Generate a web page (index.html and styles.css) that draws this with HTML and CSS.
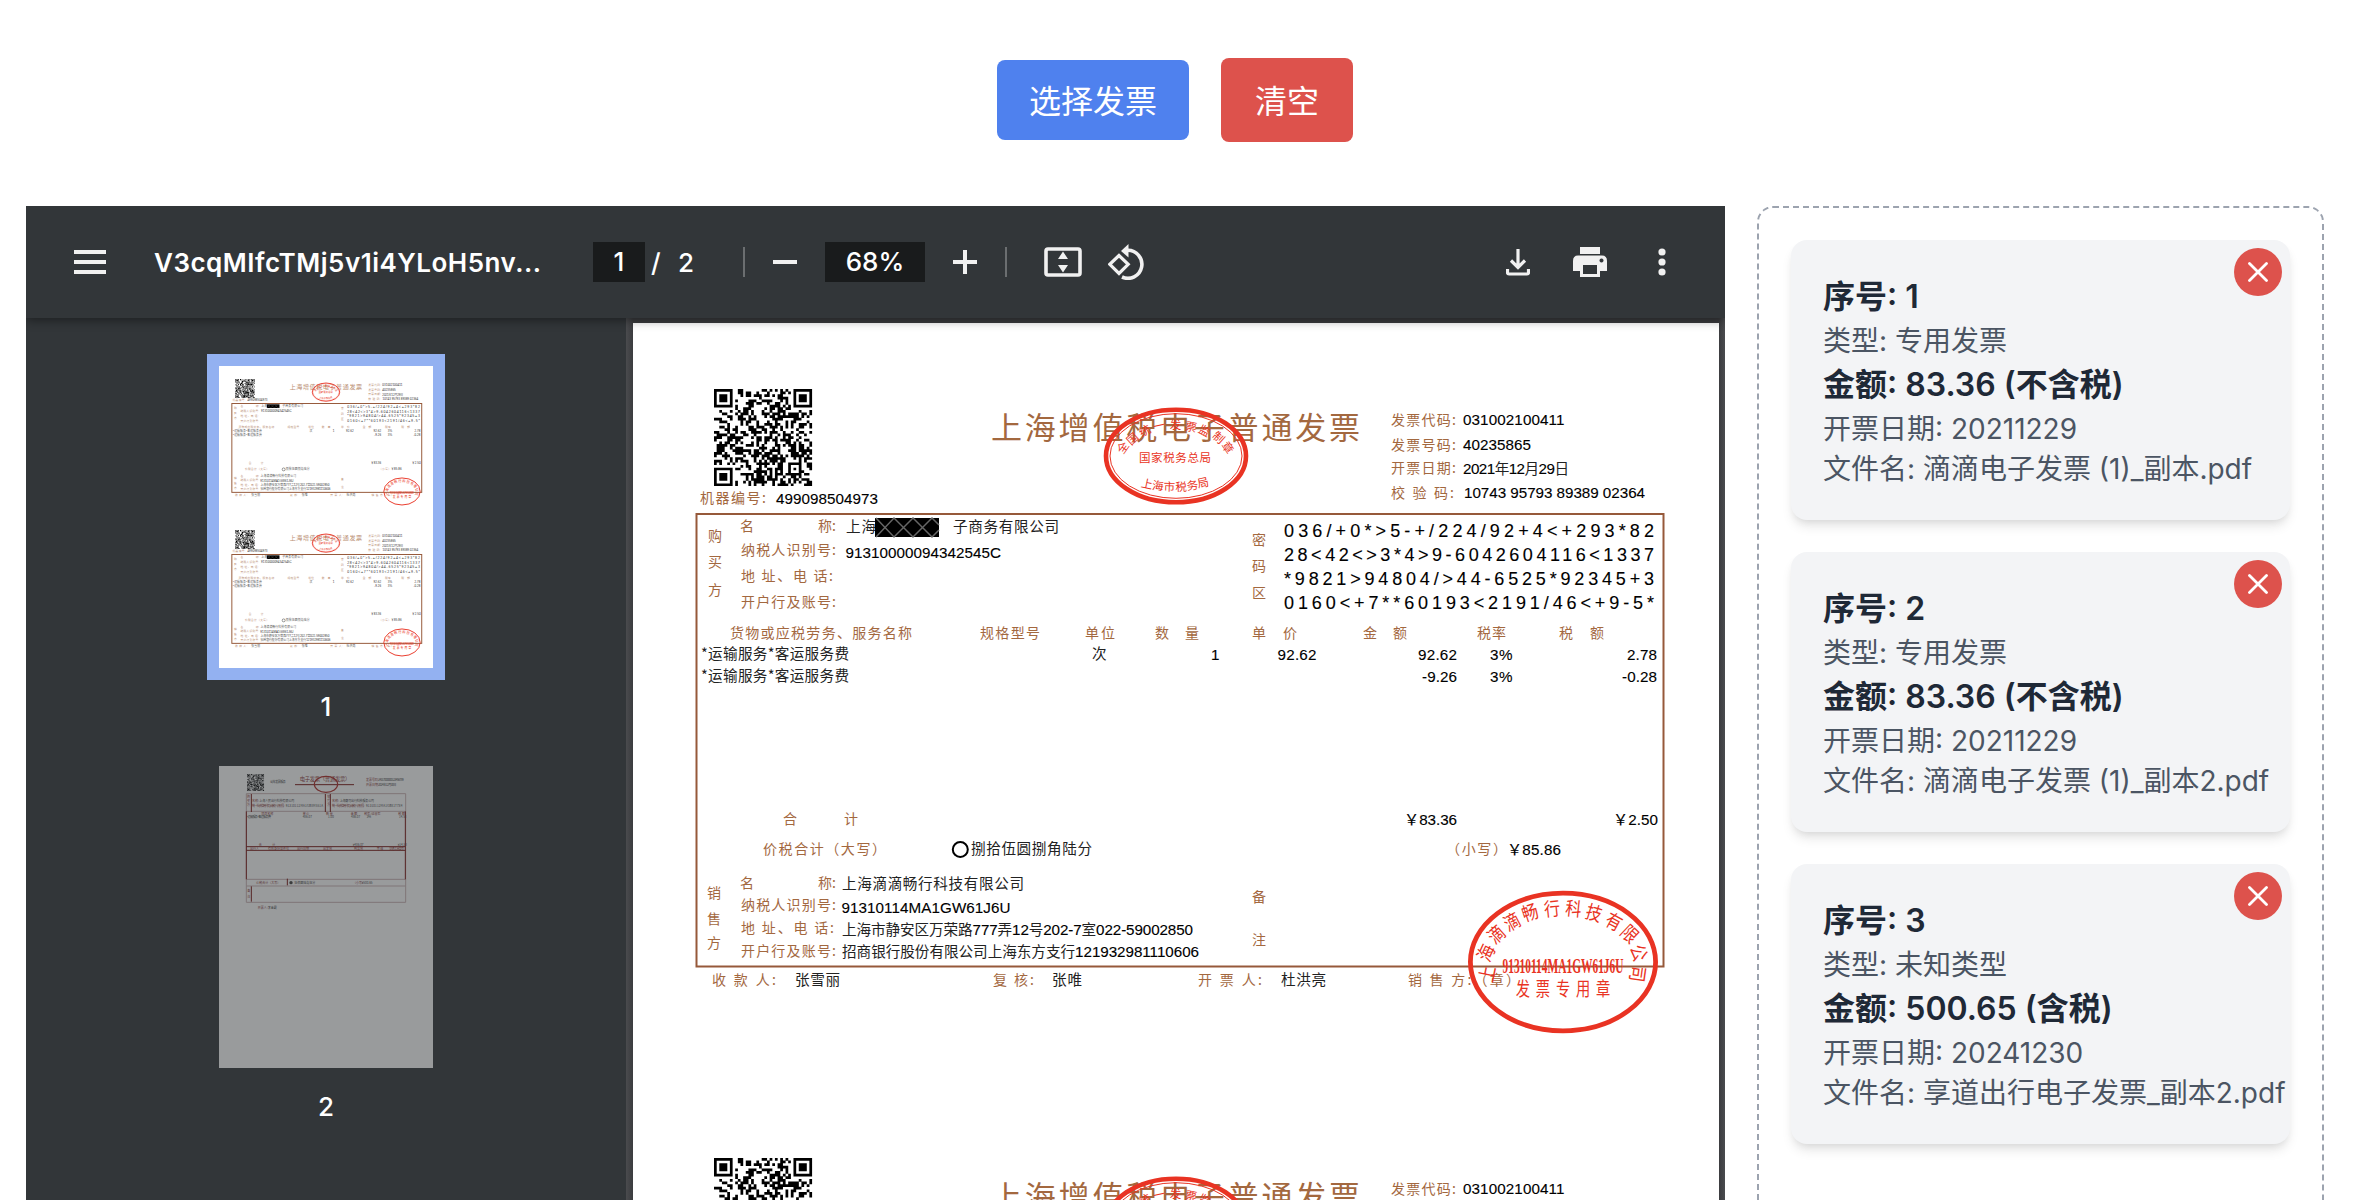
FILE: index.html
```html
<!DOCTYPE html>
<html lang="zh-CN">
<head>
<meta charset="utf-8">
<title>发票合并</title>
<link rel="stylesheet" href="styles.css">
</head>
<body>
<svg class="defs" aria-hidden="true">
  <symbol id="invoice" viewBox="633 323 1086 769">
    <path id="qr" transform="translate(714 389) scale(2.649 2.622)" d=""/>
    <g class="label">
      <text class="heading" x="991" y="440" textLength="369">上海增值税电子普通发票</text>
      <text x="700" y="504" textLength="66">机器编号:</text>
      <text x="1391" y="425.5" textLength="65">发票代码:</text>
      <text x="1391" y="450.5" textLength="65">发票号码:</text>
      <text x="1391" y="473.5" textLength="65">开票日期:</text>
      <text x="1391" y="498.5" textLength="63">校 验 码:</text>
      <text x="708" y="542">购</text><text x="708" y="568">买</text><text x="708" y="595.5">方</text>
      <text x="740" y="532">名</text><text x="818" y="532" textLength="18">称:</text>
      <text x="741" y="556" textLength="95">纳税人识别号:</text>
      <text x="741" y="581.5" textLength="92">地 址、电 话:</text>
      <text x="741" y="607.5" textLength="95">开户行及账号:</text>
      <text x="1252" y="545.5">密</text><text x="1252" y="571.5">码</text><text x="1252" y="598.5">区</text>
      <text x="730" y="638.5" textLength="182">货物或应税劳务、服务名称</text>
      <text x="980" y="638.5" textLength="60">规格型号</text>
      <text x="1085" y="638.5" textLength="30">单位</text>
      <text x="1155" y="638.5">数</text><text x="1185" y="638.5">量</text>
      <text x="1252" y="638.5">单</text><text x="1283" y="638.5">价</text>
      <text x="1363" y="638.5">金</text><text x="1393" y="638.5">额</text>
      <text x="1477" y="638.5" textLength="29">税率</text>
      <text x="1559" y="638.5">税</text><text x="1590" y="638.5">额</text>
      <text x="783" y="824.5">合</text><text x="844" y="824.5">计</text>
      <text x="763" y="854.5" textLength="123">价税合计（大写）</text>
      <text x="1446" y="854.5" textLength="61">（小写）</text>
      <text x="1252" y="902.5">备</text><text x="1252" y="946">注</text>
      <text x="707" y="898.5">销</text><text x="707" y="924.5">售</text><text x="707" y="949">方</text>
      <text x="740" y="888.5">名</text><text x="818" y="888.5" textLength="18">称:</text>
      <text x="741" y="910.5" textLength="95">纳税人识别号:</text>
      <text x="741" y="933.5" textLength="93">地 址、电 话:</text>
      <text x="741" y="957" textLength="95">开户行及账号:</text>
      <text x="712" y="985.5" textLength="64">收 款 人:</text>
      <text x="993" y="985.5" textLength="41">复 核:</text>
      <text x="1198" y="985.5" textLength="64">开 票 人:</text>
      <text x="1408" y="985.5" textLength="112">销 售 方:（章）</text>
    </g>
    <rect class="frame" x="696.5" y="514" width="967" height="452.5"/>
    <g class="value">
      <text x="776" y="504.5" textLength="102">499098504973</text>
      <text x="1463" y="426" textLength="101.5">031002100411</text>
      <text x="1463" y="450.5" textLength="68">40235865</text>
      <text x="1463" y="474.5" textLength="106">2021<tspan class="han">年</tspan>12<tspan class="han">月</tspan>29<tspan class="han">日</tspan></text>
      <text x="1464" y="498.5" textLength="181">10743 95793 89389 02364</text>
      <text class="han" x="846" y="533" textLength="30">上海</text>
      <text class="han" x="953" y="533" textLength="106">子商务有限公司</text>
      <text x="845.5" y="558.5" textLength="155.5">91310000094342545C</text>
      <g class="cipher">
        <text x="1284" y="537.5" textLength="370">036/+0*&gt;5-+/224/92+4&lt;+293*82</text>
        <text x="1284" y="561.5" textLength="370">28&lt;42&lt;&gt;3*4&gt;9-6042604116&lt;1337</text>
        <text x="1284" y="586" textLength="370">*9821&gt;94804/&gt;44-6525*92345+3</text>
        <text x="1284" y="609.5" textLength="370">0160&lt;+7**60193&lt;2191/46&lt;+9-5*</text>
      </g>
      <text class="han" x="701" y="659.5" textLength="148">*运输服务*客运服务费</text>
      <text class="han" x="701" y="681.5" textLength="148">*运输服务*客运服务费</text>
      <text class="han" x="1092" y="659.5">次</text>
      <text x="1211" y="660.5">1</text>
      <text x="1277.5" y="660.5" textLength="39">92.62</text>
      <text x="1418" y="660.5" textLength="39">92.62</text>
      <text x="1490" y="660.5" textLength="22.500">3%</text>
      <text x="1627" y="660.5" textLength="30">2.78</text>
      <text x="1422" y="682.500" textLength="35">-9.26</text>
      <text x="1490" y="682.500" textLength="22.500">3%</text>
      <text x="1622" y="682.500" textLength="35">-0.28</text>
      <text x="1404" y="825.500" textLength="53">￥83.36</text>
      <text x="1613" y="825.500" textLength="45">￥2.50</text>
      <text x="1507" y="855.500" textLength="54">￥85.86</text>
      <text class="han" x="971" y="854.5" textLength="121">捌拾伍圆捌角陆分</text>
      <text class="han" x="842" y="889.5" textLength="182">上海滴滴畅行科技有限公司</text>
      <text x="841.5" y="913.5" textLength="169">91310114MA1GW61J6U</text>
      <text x="842" y="935.5" textLength="351"><tspan class="han">上海市静安区万荣路</tspan>777<tspan class="han">弄</tspan>12<tspan class="han">号</tspan>202-7<tspan class="han">室</tspan>022-59002850</text>
      <text x="842" y="958" textLength="357"><tspan class="han">招商银行股份有限公司上海东方支行</tspan>121932981110606</text>
      <text class="han" x="795" y="985.5" textLength="45">张雪丽</text>
      <text class="han" x="1052" y="985.5" textLength="30">张唯</text>
      <text class="han" x="1281" y="985.5" textLength="45">杜洪亮</text>
    </g>
    <circle class="mark" cx="960.3" cy="849.5" r="7.5"/>
    <rect x="875" y="518" width="64" height="19"/>
    <path class="redact" d="M876 518l18 19 19-19 19 19 7-7M876 537l18-19 19 19 19-19 7 7"/>
    <g class="stamp">
      <ellipse cx="1176" cy="456" rx="70" ry="46.3" stroke-width="4.6"/>
      <ellipse cx="1176" cy="456" rx="66" ry="42.3" stroke-width="1"/>
      <g class="ring-small">
        <text transform="translate(1123 447.7) rotate(-55)" y="4">全</text>
        <text transform="translate(1132.7 439) rotate(-42)" y="4">国</text>
        <text transform="translate(1145 431) rotate(-28)" y="4">统</text>
        <text transform="translate(1159 426) rotate(-12)" y="4">一</text>
        <text transform="translate(1175.6 424.5)" y="4">发</text>
        <text transform="translate(1191 427) rotate(12)" y="4">票</text>
        <text transform="translate(1204.5 431) rotate(28)" y="4">监</text>
        <text transform="translate(1218.5 437.5) rotate(42)" y="4">制</text>
        <text transform="translate(1227.5 447.7) rotate(55)" y="4">章</text>
        <text x="1175" y="462" textLength="72">国家税务总局</text>
        <text transform="translate(1147 484) rotate(12)" y="4">上</text>
        <text transform="translate(1158 486) rotate(7)" y="4">海</text>
        <text transform="translate(1169.5 487) rotate(2)" y="4">市</text>
        <text transform="translate(1181 487) rotate(-2)" y="4">税</text>
        <text transform="translate(1192.5 485.5) rotate(-7)" y="4">务</text>
        <text transform="translate(1203 483) rotate(-12)" y="4">局</text>
      </g>
      <ellipse cx="1563" cy="962" rx="92.6" ry="68.8" stroke-width="4.8"/>
      <g class="ring-large">
        <text transform="translate(1487 974) rotate(-78) scale(.85 1)" y="7">上</text>
        <text transform="translate(1486 952.7) rotate(-65) scale(.85 1)" y="7">海</text>
        <text transform="translate(1496.4 934.5) rotate(-42) scale(.85 1)" y="7">滴</text>
        <text transform="translate(1512 921.7) rotate(-28) scale(.85 1)" y="7">滴</text>
        <text transform="translate(1530 912.7) rotate(-18) scale(.85 1)" y="7">畅</text>
        <text transform="translate(1552 908.7) rotate(-6) scale(.85 1)" y="7">行</text>
        <text transform="translate(1573.5 908.7) rotate(6) scale(.85 1)" y="7">科</text>
        <text transform="translate(1594 913) rotate(17) scale(.85 1)" y="7">技</text>
        <text transform="translate(1614 921.7) rotate(28) scale(.85 1)" y="7">有</text>
        <text transform="translate(1629.7 934) rotate(43) scale(.85 1)" y="7">限</text>
        <text transform="translate(1638.8 952.7) rotate(70) scale(.85 1)" y="7">公</text>
        <text transform="translate(1637.7 974) rotate(98) scale(.85 1)" y="7">司</text>
        <text transform="translate(1563 996) scale(.75 1)" textLength="126">发票专用章</text>
      </g>
      <text class="code" x="1563" y="972.5" textLength="121" lengthAdjust="spacingAndGlyphs">91310114MA1GW61J6U</text>
    </g>
  </symbol>
</svg>

<main class="app">
  <div class="actions">
    <button class="btn btn-pick">选择发票</button>
    <button class="btn btn-clear">清空</button>
  </div>

  <div class="workspace">
    <section class="viewer">
      <header class="toolbar">
        <svg class="menu" width="32" height="24"><path d="M0 0h32v4H0zM0 10h32v4H0zM0 20h32v4H0z"/></svg>
        <span class="filename">V3cqMIfcTMj5v1i4YLoH5nv...</span>
        <span class="field page-no">1</span>
        <span class="slash">/</span>
        <span class="total">2</span>
        <i class="divider"></i>
        <svg class="minus" width="24" height="24"><path d="M0 10h24v4H0z"/></svg>
        <span class="field zoom">68%</span>
        <svg class="plus" width="24" height="24"><path d="M0 10h24v4H0zM10 0h4v24h-4z"/></svg>
        <i class="divider second"></i>
        <svg class="fit" width="38" height="30"><rect x="2" y="2" width="34" height="26" rx="2" fill="none" stroke="#f1f1f1" stroke-width="3.6"/><path d="M19 4.500l5 7.500H14zM19 25.500l5-7.500H14z"/></svg>
        <svg class="rotate" width="36" height="36"><path d="M11 11.500L1.800 20.300l9.200 9.200 9.200-9.200z" fill="none" stroke="#f1f1f1" stroke-width="3.200"/><path d="M19.500 6.300A14 14 0 1 1 14 33" fill="none" stroke="#f1f1f1" stroke-width="3.600"/><path d="M20.500 0v13.500L13 7z"/></svg>
        <span class="tools">
          <svg width="24" height="28" viewBox="0 0 24 28"><path d="M12 1v19M5 12.500l7 7 7-7M1.500 21v3.500q0 1.500 1.500 1.500h18q1.500 0 1.500-1.500V21" fill="none" stroke="#f1f1f1" stroke-width="3.200"/></svg>
          <svg width="34" height="30"><path fill-rule="evenodd" d="M7 0h20v7H7zM5 8.500h24q5 0 5 5.500v10h-7v6H7v-6H0V14q0-5.500 5-5.500zM10 18h14v9H10zM28.500 11.500a2 2 0 1 0 .01 0z"/></svg>
          <svg width="8" height="28"><circle cx="4" cy="4" r="3.600"/><circle cx="4" cy="14" r="3.600"/><circle cx="4" cy="24" r="3.600"/></svg>
        </span>
      </header>
      <div class="viewer-body">
        <aside class="thumbs">
          <div class="thumb selected">
            <svg viewBox="0 0 214 151.500"><use href="#invoice"/></svg>
            <svg viewBox="0 0 214 151.500"><use href="#invoice"/></svg>
          </div>
          <span class="thumb-no">1</span>
          <div class="thumb dim">
            <svg class="second-page" viewBox="0 0 642 906">
              <use href="#qr-small" transform="translate(84 24) scale(1.380)"/>
              <g class="mini-black">
                <text x="154" y="52" textLength="46">动车发票服务</text>
                <text x="478" y="46" textLength="76">24317000000123456789</text>
                <text x="478" y="61" textLength="54">2024年12月30日</text>
                <text x="121" y="109" textLength="105">上海人民出行科技有限公司</text>
                <text x="200" y="123" textLength="112">91310112MA1GB8M551A</text>
                <text x="362" y="109" textLength="103">上海赛可出行科技服务公司</text>
                <text x="441" y="123" textLength="109">91310112MA1GBX1T7X4</text>
                <text x="83" y="157" textLength="73">*运输服务*客运服务费</text>
                <text x="251" y="157">486.07</text><text x="327" y="157">1.00</text><text x="396" y="157">486.07</text><text x="443" y="157">3%</text><text x="540" y="157">14.58</text>
                <text x="401" y="240">¥486.07</text><text x="536" y="240">¥14.58</text>
                <text x="226" y="354">伍佰圆陆角伍分</text><text x="428" y="354">¥500.65</text><text x="146" y="428">李金霞</text>
                <circle cx="216" cy="350" r="5"/>
              </g>
              <g class="mini-red">
                <text class="mini-title" x="242" y="46" textLength="152">电子发票（普通发票）</text>
                <text x="441" y="46">发票号码:</text><text x="441" y="61">开票日期:</text>
                <text x="84" y="97">购</text><text x="84" y="109">买</text><text x="84" y="121">方</text><text x="325" y="97">销</text><text x="325" y="109">售</text><text x="325" y="121">方</text>
                <text x="99" y="109">名称:</text><text x="99" y="123" textLength="97">统一社会信用代码/纳税人识别号:</text>
                <text x="339" y="109">名称:</text><text x="339" y="123" textLength="97">统一社会信用代码/纳税人识别号:</text>
                <text x="127" y="147">项目名称</text><text x="251" y="147">单 价</text><text x="321" y="147">数 量</text><text x="395" y="147">金 额</text><text x="436" y="147">税率/征收率</text><text x="538" y="147">税 额</text>
                <text x="119" y="240">合</text><text x="160" y="240">计</text>
                <text x="93" y="252">出行人</text><text x="147" y="252">有效身份证件号</text><text x="234" y="252">出行日期</text><text x="312" y="252">出发地</text><text x="405" y="252">到达地</text><text x="473" y="252">等 级</text><text x="510" y="252" textLength="46">交通工具类型</text>
                <text x="112" y="354">价税合计（大写）</text><text x="402" y="354">（小写）</text><text x="85" y="378">备</text><text x="85" y="396">注</text><text x="116" y="428">开票人:</text>
              </g>
              <path class="rule-light" d="M82 83h478v326H82zM82 136h478M82 340h478M82 360h478"/>
              <path class="rule-dark" d="M97 84v54M319 84v54M334 84v54M82 136v204M559 136v204M82 242h477M82 253h477M205 338v20M97 361v46M228 56h177"/>
              <ellipse class="mini-stamp" cx="321" cy="55" rx="35" ry="24"/>
            </svg>
          </div>
          <span class="thumb-no">2</span>
        </aside>
        <div class="canvas">
          <div class="sheet">
            <svg viewBox="0 0 1086 769"><use href="#invoice"/></svg>
            <svg viewBox="0 0 1086 769"><use href="#invoice"/></svg>
          </div>
        </div>
      </div>
    </section>

    <aside class="panel">
      <article class="card">
        <h3>序号: 1</h3>
        <p>类型: 专用发票</p>
        <h3>金额: 83.36 (不含税)</h3>
        <p>开票日期: 20211229</p>
        <p>文件名: 滴滴电子发票 (1)_副本.pdf</p>
        <button class="close"><svg width="20" height="20"><path d="M1.500 1.500l17 17M18.500 1.500l-17 17"/></svg></button>
      </article>
      <article class="card">
        <h3>序号: 2</h3>
        <p>类型: 专用发票</p>
        <h3>金额: 83.36 (不含税)</h3>
        <p>开票日期: 20211229</p>
        <p>文件名: 滴滴电子发票 (1)_副本2.pdf</p>
        <button class="close"><svg width="20" height="20"><path d="M1.500 1.500l17 17M18.500 1.500l-17 17"/></svg></button>
      </article>
      <article class="card">
        <h3>序号: 3</h3>
        <p>类型: 未知类型</p>
        <h3>金额: 500.65 (含税)</h3>
        <p>开票日期: 20241230</p>
        <p>文件名: 享道出行电子发票_副本2.pdf</p>
        <button class="close"><svg width="20" height="20"><path d="M1.500 1.500l17 17M18.500 1.500l-17 17"/></svg></button>
      </article>
    </aside>
  </div>
</main>
<svg class="defs" aria-hidden="true"><path id="qr-small" d=""/></svg>
<script src="qr.js"></script>
</body>
</html>
```
FILE: qr.js
```js
// Builds the QR block as one path of unit modules on a 37 x 37 grid.
const SIZE = 37;

function finder(x, y) {
  const edge = Math.max(Math.abs(x - 3), Math.abs(y - 3));
  return edge === 3 || edge <= 1;
}

let seed = 20211229;
function random() {
  seed = (seed * 1103515245 + 12345) % 2147483648;
  return seed / 2147483648;
}

let d = '';
for (let y = 0; y < SIZE; y++) {
  for (let x = 0; x < SIZE; x++) {
    let on = random() < 0.5;
    const fx = x < 8 ? x : x >= SIZE - 8 ? SIZE - 1 - x : -1;
    const fy = y < 8 ? y : y >= SIZE - 8 ? SIZE - 1 - y : -1;
    if (fx >= 0 && fy >= 0 && !(x >= SIZE - 8 && y >= SIZE - 8)) {
      on = fx < 7 && fy < 7 && finder(fx, fy);
    } else if (Math.abs(x - 30) <= 2 && Math.abs(y - 30) <= 2) {
      on = Math.max(Math.abs(x - 30), Math.abs(y - 30)) !== 1;
    }
    if (on) d += `M${x} ${y}h1.03v1.03h-1.03z`;
  }
}
document.getElementById('qr').setAttribute('d', d);
document.getElementById('qr-small').setAttribute('d', d);
```
FILE: styles.css
```css
* { box-sizing: border-box; }

body {
  margin: 0;
  height: 1200px;
  overflow: hidden;
  background: #fff;
  font-family: Inter, "Noto Sans CJK SC", sans-serif;
}

h3, p { margin: 0; }
svg { display: block; }
.defs { position: absolute; width: 0; height: 0; }

.app { width: 2298px; margin-left: 26px; }

.actions {
  height: 206px;
  padding-bottom: 6px;
  display: flex;
  justify-content: center;
  align-items: center;
  gap: 32px;
}

.btn {
  border: 0;
  border-radius: 8px;
  color: #fff;
  font: 400 32px/48px Inter, "Noto Sans CJK SC", sans-serif;
}
.btn-pick { width: 192px; height: 80px; padding: 3px 0 0; background: #4f81ee; }
.btn-clear { width: 132px; height: 84px; padding: 3px 0 0; background: #dd524c; }

.workspace { display: flex; gap: 32px; height: 994px; }

.viewer { width: 1699px; background: #323639; display: flex; flex-direction: column; }

.toolbar {
  position: relative;
  z-index: 1;
  height: 112px;
  flex: none;
  padding-left: 48px;
  display: flex;
  align-items: center;
  background: #323639;
  box-shadow: 0 2px 10px rgba(0, 0, 0, .45);
  clip-path: inset(0 0 -24px 0);
  color: #fff;
  font-size: 26px;
  font-weight: 500;
}
.toolbar svg { fill: #f1f1f1; flex: none; }
.filename { width: 391px; margin-left: 48px; font-weight: 600; letter-spacing: .5px; white-space: nowrap; }
.field { height: 40px; line-height: 40px; background: #191b1c; text-align: center; }
.page-no { width: 52px; margin-left: 48px; }
.slash { width: 20px; margin-left: 6px; }
.total { width: 20px; margin-left: 7px; }
.divider { width: 2px; height: 30px; margin-left: 45px; background: #6b6e70; }
.minus { margin-left: 28px; }
.zoom { width: 100px; margin-left: 28px; }
.plus { margin-left: 28px; }
.second { margin-left: 28px; }
.fit { margin-left: 37px; }
.rotate { margin-left: 26px; }
.tools { margin-left: auto; margin-right: 59px; display: flex; align-items: center; gap: 43px; }
.tools svg:last-child { margin-left: 8px; }

.viewer-body { display: flex; flex: 1; min-height: 0; }

.thumbs {
  width: 600px;
  padding-top: 36px;
  display: flex;
  flex-direction: column;
  align-items: center;
}
.thumb { width: 214px; height: 302px; background: #fff; flex: none; }
.thumb svg { width: 214px; height: 151px; }
.thumb svg.second-page { height: 302px; }
.selected { box-sizing: content-box; border: 12px solid #93b1f1; --frame-width: 5px; --text-fade: .75; }
.dim { opacity: .5; }
.thumb-no { height: 50px; line-height: 53px; color: #fff; font-size: 26px; font-weight: 500; }
.thumb-no + .thumb { margin-top: 36px; }
.dim + .thumb-no { margin-top: 12px; }

.canvas {
  flex: 1;
  padding: 5px 6px 0 7px;
  overflow: hidden;
  background: linear-gradient(90deg, #4a4b4e, #3b3c3f 7px, #3b3c3f calc(100% - 6px), #4a4b4e);
}
.sheet { height: 1533px; background: #fff; }
.sheet svg { width: 1086px; height: 769px; }

.label, .value { transform: translateY(-1px); opacity: var(--text-fade, 1); }
.label { fill: #a3683f; font: 14px "Noto Sans CJK SC", sans-serif; }
.label .heading { font-size: 31px; }
.frame { fill: none; stroke: #96593a; stroke-width: var(--frame-width, 2px); }
.value { fill: #000; font: 15.200px "Liberation Sans", "Noto Sans CJK SC", sans-serif; stroke: #000; stroke-width: .12px; }
.value .han { font-family: "Noto Sans CJK SC", sans-serif; font-size: 14.600px; stroke: none; fill: #222; }
.cipher { font-size: 18px; }
.mark { fill: none; stroke: #000; stroke-width: 2; }
.redact { fill: none; stroke: #666; stroke-width: 1.500; }
.stamp { fill: none; stroke: #e93323; }
.stamp text { fill: #e93323; stroke: none; text-anchor: middle; font-family: "Noto Sans CJK SC", sans-serif; }
.ring-small { font-size: 11.500px; }
.ring-large { font-size: 19px; }
.stamp .code { font: bold 20px "Liberation Serif", serif; }

.second-page text { font: 9px "Noto Sans CJK SC", sans-serif; }
.mini-black { fill: #444; }
.mini-red { fill: #8b3a38; }
.second-page .mini-title { font-size: 16px; }
.rule-light { fill: none; stroke: #cbb4b4; stroke-width: 3; }
.rule-dark { fill: none; stroke: #7b1512; stroke-width: 3; }
.mini-stamp { fill: none; stroke: #b02a26; stroke-width: 3.500; }

.panel {
  width: 567px;
  padding: 32px 32px 0;
  border: 2px dashed #9ca3af;
  border-bottom: 0;
  border-radius: 16px 16px 0 0;
  display: flex;
  flex-direction: column;
  gap: 32px;
}
.card {
  position: relative;
  height: 280px;
  flex: none;
  padding: 33px 32px 31px;
  border-radius: 16px;
  background: #f3f4f6;
  box-shadow: 0 8px 12px -2px rgba(0, 0, 0, .1), 0 4px 8px -4px rgba(0, 0, 0, .1);
  white-space: nowrap;
}
.card h3 { color: #1f2937; font-size: 32px; line-height: 48px; font-weight: 600; }
.card p { color: #4b5563; font-size: 28px; line-height: 40px; }
.close {
  position: absolute;
  top: 8px;
  right: 8px;
  width: 48px;
  height: 48px;
  padding: 0;
  border: 0;
  border-radius: 50%;
  background: #dd524c;
  display: grid;
  place-items: center;
}
.close path { fill: none; stroke: #fff; stroke-width: 2.800; stroke-linecap: round; }
```
